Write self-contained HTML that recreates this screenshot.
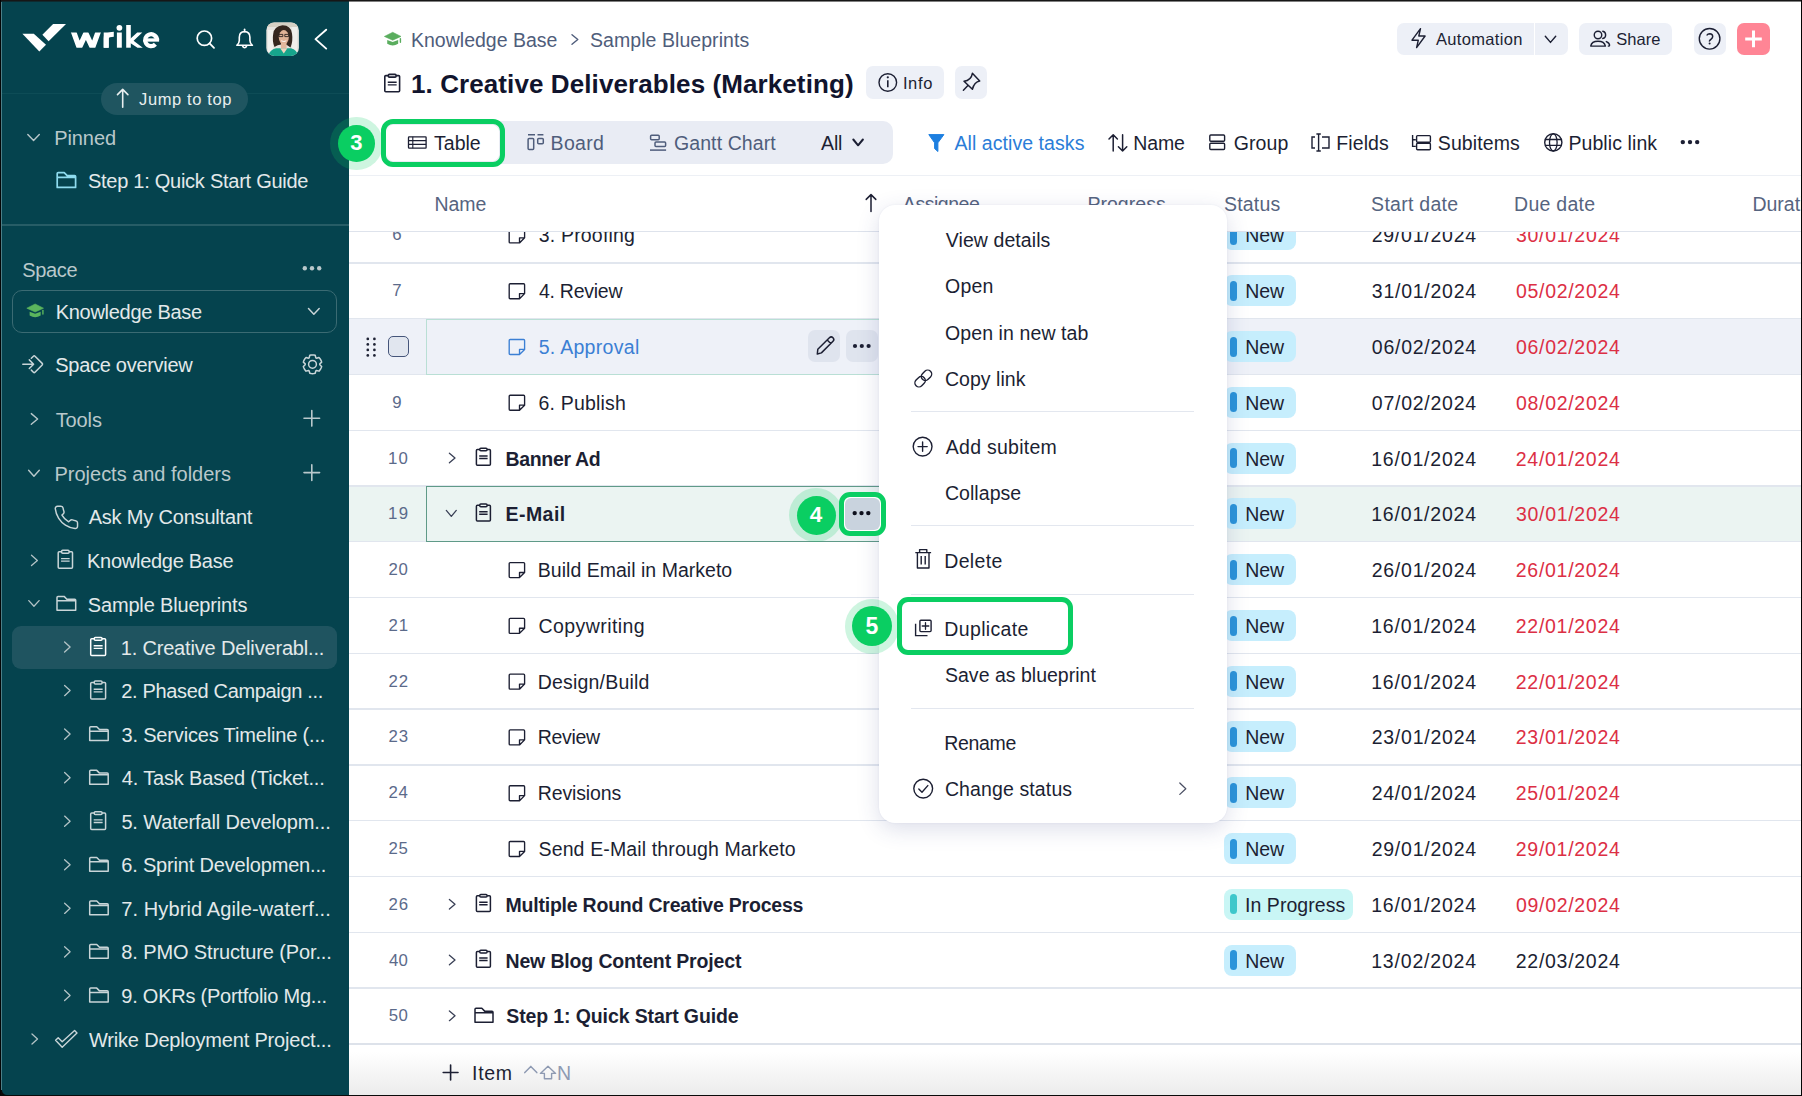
<!DOCTYPE html>
<html><head><meta charset="utf-8">
<style>
*{box-sizing:border-box;margin:0;padding:0}
html,body{width:1802px;height:1096px;overflow:hidden;background:#fff;font-family:"Liberation Sans",sans-serif;position:relative}
.a{position:absolute}
.t{position:absolute;white-space:nowrap;line-height:30px;height:30px}
svg{position:absolute;overflow:visible}
</style></head><body>
<div class="a" style="left:0px;top:0px;width:349px;height:1096px;background:#05434e;"></div>
<div class="a" style="left:1px;top:92.5px;width:348px;height:1px;background:#0d4c56;"></div>
<div class="a" style="left:1px;top:224px;width:348px;height:2px;background:#275d66;"></div>
<div class="a" style="left:101px;top:83px;width:147px;height:32px;background:#1f5560;border-radius:16px;"></div>
<div class="t" style="left:139.05px;top:83.80px;font-size:16.5px;color:#e8eeef;letter-spacing:0.620px;">Jump to top</div>
<div class="t" style="left:54.15px;top:122.50px;font-size:20px;color:#b9c8cb;letter-spacing:-0.070px;">Pinned</div>
<div class="t" style="left:87.90px;top:165.70px;font-size:20px;color:#e3e9ea;letter-spacing:-0.258px;">Step 1: Quick Start Guide</div>
<div class="t" style="left:22.30px;top:255.00px;font-size:20px;color:#b9c8cb;letter-spacing:-0.338px;">Space</div>
<div class="a" style="left:12px;top:289.5px;width:325px;height:43px;border:1.5px solid #3b6b73;border-radius:10px;"></div>
<div class="t" style="left:55.65px;top:297.00px;font-size:20px;color:#e3e9ea;letter-spacing:-0.277px;">Knowledge Base</div>
<div class="t" style="left:55.30px;top:350.00px;font-size:20px;color:#e3e9ea;letter-spacing:-0.288px;">Space overview</div>
<div class="t" style="left:55.75px;top:404.50px;font-size:20px;color:#b9c8cb;letter-spacing:-0.137px;">Tools</div>
<div class="t" style="left:54.55px;top:458.50px;font-size:20px;color:#b9c8cb;letter-spacing:-0.021px;">Projects and folders</div>
<div class="t" style="left:88.65px;top:502.20px;font-size:20px;color:#e3e9ea;letter-spacing:-0.184px;">Ask My Consultant</div>
<div class="t" style="left:87.05px;top:545.90px;font-size:20px;color:#e3e9ea;letter-spacing:-0.277px;">Knowledge Base</div>
<div class="t" style="left:87.80px;top:589.50px;font-size:20px;color:#e3e9ea;letter-spacing:-0.169px;">Sample Blueprints</div>
<div class="a" style="left:12px;top:626px;width:325px;height:43px;background:#1f5460;border-radius:9px;"></div>
<div class="t" style="left:120.70px;top:632.50px;font-size:20px;color:#e3e9ea;letter-spacing:-0.173px;">1. Creative Deliverabl...</div>
<div class="t" style="left:121.20px;top:676.05px;font-size:20px;color:#e3e9ea;letter-spacing:-0.329px;">2. Phased Campaign ...</div>
<div class="t" style="left:121.45px;top:719.60px;font-size:20px;color:#e3e9ea;letter-spacing:-0.162px;">3. Services Timeline (...</div>
<div class="t" style="left:121.75px;top:763.15px;font-size:20px;color:#e3e9ea;letter-spacing:-0.161px;">4. Task Based (Ticket...</div>
<div class="t" style="left:121.40px;top:806.70px;font-size:20px;color:#e3e9ea;letter-spacing:-0.146px;">5. Waterfall Developm...</div>
<div class="t" style="left:121.20px;top:850.25px;font-size:20px;color:#e3e9ea;letter-spacing:-0.173px;">6. Sprint Developmen...</div>
<div class="t" style="left:121.20px;top:893.80px;font-size:20px;color:#e3e9ea;letter-spacing:0.119px;">7. Hybrid Agile-waterf...</div>
<div class="t" style="left:121.35px;top:937.35px;font-size:20px;color:#e3e9ea;letter-spacing:-0.128px;">8. PMO Structure (Por...</div>
<div class="t" style="left:121.30px;top:980.90px;font-size:20px;color:#e3e9ea;letter-spacing:-0.237px;">9. OKRs (Portfolio Mg...</div>
<div class="t" style="left:88.90px;top:1024.50px;font-size:20px;color:#e3e9ea;letter-spacing:-0.177px;">Wrike Deployment Project...</div>
<svg style="left:0;top:0" width="1802" height="1096" viewBox="0 0 1802 1096"><polygon points="22.4,33.8 33.8,33.8 46,44.8 39.3,51.4" fill="#fff"/><polygon points="42.4,34.7 53.1,23.9 66,23.9 48.6,41.2" fill="#fff"/><defs><clipPath id="wk"><rect x="60" y="32.5" width="110" height="15.3"/></clipPath></defs><polyline clip-path="url(#wk)" points="72.2,28 79.3,47.6 85.9,33.5 92.5,47.6 99.6,28" fill="none" stroke="#fff" stroke-width="5.4" stroke-linejoin="miter" stroke-miterlimit="10"/><path d="M106.2,47.7 L106.2,38.5 Q106.2,34.2 113.8,34.2" fill="none" stroke="#fff" stroke-width="5"/><rect x="103.7" y="32.5" width="5" height="15.2" fill="#fff"/><rect x="116.9" y="32.5" width="4.9" height="15.2" fill="#fff"/><circle cx="119.4" cy="27.8" r="2.9" fill="#fff"/><rect x="126.2" y="25" width="4.6" height="22.7" fill="#fff"/><polygon points="129.5,39.5 137.2,32.5 142.3,32.5 133.6,40.8 142.8,47.7 137.5,47.7 129.5,42.5" fill="#fff"/><path d="M157.05,40.1 A5.95,5.95 0 1 0 155.4,44.3" fill="none" stroke="#fff" stroke-width="4.3"/><path d="M145,40 L159.1,40" stroke="#fff" stroke-width="3.3"/><circle cx="204.4" cy="38.2" r="7.2" fill="none" stroke="#fff" stroke-width="1.7"/><path d="M209.6,43.4 L214,47.8" stroke="#fff" stroke-width="1.8" stroke-linecap="round"/><path d="M236.8,45.3 Q239.3,43.3 239.3,40.5 L239.3,37.3 Q239.3,31.6 244.6,31.6 Q249.9,31.6 249.9,37.3 L249.9,40.5 Q249.9,43.3 252.4,45.3 Z" fill="none" stroke="#fff" stroke-width="1.6" stroke-linejoin="round"/><path d="M242.4,46 Q244.6,49.5 246.8,46" fill="none" stroke="#fff" stroke-width="1.6"/><path d="M244.6,29.2 L244.6,31.6" stroke="#fff" stroke-width="1.6" stroke-linecap="round"/><defs><clipPath id="av"><rect x="266.3" y="22.5" width="32.6" height="33.4" rx="8"/></clipPath></defs>
<g clip-path="url(#av)">
<rect x="266" y="22" width="34" height="35" fill="#e6e4df"/>
<rect x="266" y="22" width="34" height="5" fill="#d6d0c4"/>
<rect x="268" y="30" width="5" height="22" fill="#f2f1ee"/>
<rect x="292" y="27" width="5" height="26" fill="#f0eeea"/>
<path d="M274.5,47 Q272,41 273.2,34 Q274,26.5 282.5,25.3 Q291,25.5 292,33.5 Q293.2,41 290.5,47.5 Q287,44 282.5,44.5 Q278,44 274.5,47 Z" fill="#35261e"/>
<ellipse cx="283.8" cy="37.2" rx="5" ry="7.1" fill="#e0b296"/>
<path d="M279,34.4 L282.8,34.4 L282.8,36.6 L279,36.6 Z M284.8,34.4 L288.6,34.4 L288.6,36.6 L284.8,36.6 Z" fill="none" stroke="#2b2320" stroke-width="0.9"/>
<path d="M281.2,40.8 Q283.8,42.3 286.4,40.8" fill="none" stroke="#fff" stroke-width="0.9"/>
<rect x="281" y="43" width="5.6" height="6" fill="#e3b89d"/>
<path d="M268,57 Q269,50 276,48.2 L291,48.2 Q297.5,50 298.5,57 Z" fill="#17a58c"/>
<path d="M280.2,48.2 L283.8,53.5 L287.4,48.2 Z" fill="#f1d3bf"/>
</g><polyline points="326.20,29.70 315.50,39.15 326.20,48.60" fill="none" stroke="#fff" stroke-width="1.9" stroke-linecap="round" stroke-linejoin="round" /><path d="M122.7,89.5 L122.7,107.2 M117.5,94.6 L122.7,89.4 L127.9,94.6" fill="none" stroke="#e8eeef" stroke-width="1.6" stroke-linecap="round" stroke-linejoin="round"/><polyline points="27.80,134.50 33.55,140.50 39.30,134.50" fill="none" stroke="#b9c8cb" stroke-width="1.4" stroke-linecap="round" stroke-linejoin="round" /><path d="M57.2,187.4 L57.2,173.6 Q57.2,172.6 58.2,172.6 L64.192,172.6 L67.152,175.56 L74.6,175.56 Q75.6,175.56 75.6,176.56 L75.6,187.4 Z M57.2,177.336 L75.6,177.336" fill="none" stroke="#8fdcef" stroke-width="1.7" stroke-linejoin="round"/><circle cx="304.8" cy="268.3" r="2.2" fill="#b9c8cb"/><circle cx="312.0" cy="268.3" r="2.2" fill="#b9c8cb"/><circle cx="319.2" cy="268.3" r="2.2" fill="#b9c8cb"/><path d="M26.8,308.2 L35.15,304 L43.5,308.2 L35.15,311.98 Z" fill="#5bb55d" stroke="#5bb55d" stroke-width="0.6" stroke-linejoin="round"/><path d="M29.639,311.84 L35.15,313.8 L40.661,311.84 L40.661,315.62 Q35.15,319.12 29.639,315.62 Z" fill="#5bb55d"/><path d="M42.915499999999994,310.44 L42.915499999999994,314.08" stroke="#5bb55d" stroke-width="1.4" stroke-linecap="round"/><polyline points="308.50,308.50 313.85,314.20 319.20,308.50" fill="none" stroke="#c8d3d6" stroke-width="1.5" stroke-linecap="round" stroke-linejoin="round" /><path d="M22.8,364.2 L33.6,364.2 M29.3,359.9 L33.6,364.2 L29.3,368.5" fill="none" stroke="#c9d5d8" stroke-width="1.5" stroke-linecap="round" stroke-linejoin="round"/><path d="M31.3,358.3 L33.4,356.2 Q34.2,355.4 35,356.2 L42.2,363.4 Q43,364.2 42.2,365 L35,372.2 Q34.2,373 33.4,372.2 L31.3,370.1" fill="none" stroke="#c9d5d8" stroke-width="1.5" stroke-linecap="round" stroke-linejoin="round"/><polygon points="309.20,357.79 309.80,355.30 311.14,355.00 312.50,354.90 313.86,355.00 315.20,355.30 315.80,357.79 315.92,357.85 316.03,357.91 316.15,357.98 316.26,358.05 316.38,358.11 316.49,358.19 318.95,357.46 319.87,358.47 320.64,359.60 321.24,360.83 321.65,362.14 319.79,363.90 319.80,364.03 319.80,364.17 319.80,364.30 319.80,364.43 319.80,364.57 319.79,364.70 321.65,366.46 321.24,367.77 320.64,369.00 319.87,370.13 318.95,371.14 316.49,370.41 316.38,370.49 316.26,370.55 316.15,370.62 316.03,370.69 315.92,370.75 315.80,370.81 315.20,373.30 313.86,373.60 312.50,373.70 311.14,373.60 309.80,373.30 309.20,370.81 309.08,370.75 308.97,370.69 308.85,370.62 308.74,370.55 308.62,370.49 308.51,370.41 306.05,371.14 305.13,370.13 304.36,369.00 303.76,367.77 303.35,366.46 305.21,364.70 305.20,364.57 305.20,364.43 305.20,364.30 305.20,364.17 305.20,364.03 305.21,363.90 303.35,362.14 303.76,360.83 304.36,359.60 305.13,358.47 306.05,357.46 308.51,358.19 308.62,358.11 308.74,358.05 308.85,357.98 308.97,357.91 309.08,357.85" fill="none" stroke="#c9d5d8" stroke-width="1.5" stroke-linecap="round" stroke-linejoin="round" /><circle cx="312.5" cy="364.3" r="3.9" fill="none" stroke="#c9d5d8" stroke-width="1.5"/><polyline points="31.30,413.60 37.60,418.95 31.30,424.30" fill="none" stroke="#b9c8cb" stroke-width="1.4" stroke-linecap="round" stroke-linejoin="round" /><path d="M304.0,418.3 L319.6,418.3 M311.8,410.5 L311.8,426.1" stroke="#b9c8cb" stroke-width="1.6" stroke-linecap="round"/><polyline points="28.60,470.20 33.95,476.20 39.30,470.20" fill="none" stroke="#b9c8cb" stroke-width="1.4" stroke-linecap="round" stroke-linejoin="round" /><path d="M304.0,472.6 L319.6,472.6 M311.8,464.8 L311.8,480.40000000000003" stroke="#b9c8cb" stroke-width="1.6" stroke-linecap="round"/><g transform="translate(52.9,504) scale(1.12)"><path d="M22 16.92v3a2 2 0 0 1-2.18 2 19.79 19.79 0 0 1-8.63-3.07 19.5 19.5 0 0 1-6-6 19.79 19.79 0 0 1-3.07-8.67A2 2 0 0 1 4.11 2h3a2 2 0 0 1 2 1.72 12.84 12.84 0 0 0 .7 2.81 2 2 0 0 1-.45 2.11L8.09 9.91a16 16 0 0 0 6 6l1.27-1.27a2 2 0 0 1 2.11-.45 12.84 12.84 0 0 0 2.81.7A2 2 0 0 1 22 16.92z" fill="none" stroke="#c9d5d8" stroke-width="1.3" stroke-linejoin="round"/></g><polyline points="31.50,555.30 37.40,560.40 31.50,565.50" fill="none" stroke="#b3c3c6" stroke-width="1.3" stroke-linecap="round" stroke-linejoin="round" /><path d="M61.632000000000005,551.657 L59.2,551.657 Q58.2,551.657 58.2,552.657 L58.2,567.3 Q58.2,568.3 59.2,568.3 L71.5,568.3 Q72.5,568.3 72.5,567.3 L72.5,552.657 Q72.5,551.657 71.5,551.657 L69.068,551.657" fill="none" stroke="#c9d5d8" stroke-width="1.5" stroke-linejoin="round"/><rect x="61.632000000000005" y="550.35" width="7.435999999999999" height="2.8049999999999895" rx="1" fill="none" stroke="#c9d5d8" stroke-width="1.5"/><path d="M61.06,558.576 L69.64,558.576 M61.06,561.194 L69.64,561.194" stroke="#c9d5d8" stroke-width="1.35"/><polyline points="28.80,600.60 33.95,606.20 39.10,600.60" fill="none" stroke="#b3c3c6" stroke-width="1.3" stroke-linecap="round" stroke-linejoin="round" /><path d="M57,610.2 L57,597.4 Q57,596.4 58,596.4 L64.106,596.4 L66.86600000000001,599.16 L74.7,599.16 Q75.7,599.16 75.7,600.16 L75.7,610.2 Z M57,600.816 L75.7,600.816" fill="none" stroke="#c9d5d8" stroke-width="1.5" stroke-linejoin="round"/><polyline points="64.60,641.90 70.10,647.00 64.60,652.10" fill="none" stroke="#b3c3c6" stroke-width="1.3" stroke-linecap="round" stroke-linejoin="round" /><path d="M94.276,638.846 L91.7,638.846 Q90.7,638.846 90.7,639.846 L90.7,654.4 Q90.7,655.4 91.7,655.4 L104.6,655.4 Q105.6,655.4 105.6,654.4 L105.6,639.846 Q105.6,638.846 104.6,638.846 L102.024,638.846" fill="none" stroke="#ffffff" stroke-width="1.5" stroke-linejoin="round"/><rect x="94.276" y="637.55" width="7.747999999999996" height="2.790000000000003" rx="1" fill="none" stroke="#ffffff" stroke-width="1.5"/><path d="M93.68,645.728 L102.61999999999999,645.728 M93.68,648.332 L102.61999999999999,648.332" stroke="#ffffff" stroke-width="1.35"/><polyline points="64.60,685.45 70.10,690.55 64.60,695.65" fill="none" stroke="#b3c3c6" stroke-width="1.3" stroke-linecap="round" stroke-linejoin="round" /><path d="M94.276,682.396 L91.7,682.396 Q90.7,682.396 90.7,683.396 L90.7,697.9499999999999 Q90.7,698.9499999999999 91.7,698.9499999999999 L104.6,698.9499999999999 Q105.6,698.9499999999999 105.6,697.9499999999999 L105.6,683.396 Q105.6,682.396 104.6,682.396 L102.024,682.396" fill="none" stroke="#c9d5d8" stroke-width="1.5" stroke-linejoin="round"/><rect x="94.276" y="681.0999999999999" width="7.747999999999996" height="2.790000000000003" rx="1" fill="none" stroke="#c9d5d8" stroke-width="1.5"/><path d="M93.68,689.2779999999999 L102.61999999999999,689.2779999999999 M93.68,691.882 L102.61999999999999,691.882" stroke="#c9d5d8" stroke-width="1.35"/><polyline points="64.60,729.00 70.10,734.10 64.60,739.20" fill="none" stroke="#b3c3c6" stroke-width="1.3" stroke-linecap="round" stroke-linejoin="round" /><path d="M89.7,740.6 L89.7,727.8000000000001 Q89.7,726.8000000000001 90.7,726.8000000000001 L96.73,726.8000000000001 L99.49,729.5600000000001 L107.2,729.5600000000001 Q108.2,729.5600000000001 108.2,730.5600000000001 L108.2,740.6 Z M89.7,731.216 L108.2,731.216" fill="none" stroke="#c9d5d8" stroke-width="1.5" stroke-linejoin="round"/><polyline points="64.60,772.55 70.10,777.65 64.60,782.75" fill="none" stroke="#b3c3c6" stroke-width="1.3" stroke-linecap="round" stroke-linejoin="round" /><path d="M89.7,784.15 L89.7,771.35 Q89.7,770.35 90.7,770.35 L96.73,770.35 L99.49,773.11 L107.2,773.11 Q108.2,773.11 108.2,774.11 L108.2,784.15 Z M89.7,774.766 L108.2,774.766" fill="none" stroke="#c9d5d8" stroke-width="1.5" stroke-linejoin="round"/><polyline points="64.60,816.10 70.10,821.20 64.60,826.30" fill="none" stroke="#b3c3c6" stroke-width="1.3" stroke-linecap="round" stroke-linejoin="round" /><path d="M94.276,813.046 L91.7,813.046 Q90.7,813.046 90.7,814.046 L90.7,828.6 Q90.7,829.6 91.7,829.6 L104.6,829.6 Q105.6,829.6 105.6,828.6 L105.6,814.046 Q105.6,813.046 104.6,813.046 L102.024,813.046" fill="none" stroke="#c9d5d8" stroke-width="1.5" stroke-linejoin="round"/><rect x="94.276" y="811.75" width="7.747999999999996" height="2.790000000000003" rx="1" fill="none" stroke="#c9d5d8" stroke-width="1.5"/><path d="M93.68,819.928 L102.61999999999999,819.928 M93.68,822.532 L102.61999999999999,822.532" stroke="#c9d5d8" stroke-width="1.35"/><polyline points="64.60,859.65 70.10,864.75 64.60,869.85" fill="none" stroke="#b3c3c6" stroke-width="1.3" stroke-linecap="round" stroke-linejoin="round" /><path d="M89.7,871.25 L89.7,858.45 Q89.7,857.45 90.7,857.45 L96.73,857.45 L99.49,860.21 L107.2,860.21 Q108.2,860.21 108.2,861.21 L108.2,871.25 Z M89.7,861.866 L108.2,861.866" fill="none" stroke="#c9d5d8" stroke-width="1.5" stroke-linejoin="round"/><polyline points="64.60,903.20 70.10,908.30 64.60,913.40" fill="none" stroke="#b3c3c6" stroke-width="1.3" stroke-linecap="round" stroke-linejoin="round" /><path d="M89.7,914.8 L89.7,902.0 Q89.7,901.0 90.7,901.0 L96.73,901.0 L99.49,903.76 L107.2,903.76 Q108.2,903.76 108.2,904.76 L108.2,914.8 Z M89.7,905.4159999999999 L108.2,905.4159999999999" fill="none" stroke="#c9d5d8" stroke-width="1.5" stroke-linejoin="round"/><polyline points="64.60,946.75 70.10,951.85 64.60,956.95" fill="none" stroke="#b3c3c6" stroke-width="1.3" stroke-linecap="round" stroke-linejoin="round" /><path d="M89.7,958.3499999999999 L89.7,945.55 Q89.7,944.55 90.7,944.55 L96.73,944.55 L99.49,947.31 L107.2,947.31 Q108.2,947.31 108.2,948.31 L108.2,958.3499999999999 Z M89.7,948.9659999999999 L108.2,948.9659999999999" fill="none" stroke="#c9d5d8" stroke-width="1.5" stroke-linejoin="round"/><polyline points="64.60,990.30 70.10,995.40 64.60,1000.50" fill="none" stroke="#b3c3c6" stroke-width="1.3" stroke-linecap="round" stroke-linejoin="round" /><path d="M89.7,1001.9 L89.7,989.1 Q89.7,988.1 90.7,988.1 L96.73,988.1 L99.49,990.86 L107.2,990.86 Q108.2,990.86 108.2,991.86 L108.2,1001.9 Z M89.7,992.516 L108.2,992.516" fill="none" stroke="#c9d5d8" stroke-width="1.5" stroke-linejoin="round"/><polyline points="32.00,1034.00 37.50,1039.00 32.00,1044.00" fill="none" stroke="#b3c3c6" stroke-width="1.3" stroke-linecap="round" stroke-linejoin="round" /><path d="M55.6,1040.3 L58.2,1037.8 L62.2,1041.8 L74.6,1030.6 L77,1033 L62.2,1047.2 Z" fill="none" stroke="#c9d5d8" stroke-width="1.4" stroke-linejoin="round"/></svg>
<div class="a" style="left:349px;top:318.69000000000005px;width:1452px;height:55.78px;background:#eef1f8;"></div>
<div class="a" style="left:349px;top:486.03px;width:1452px;height:55.78px;background:#ebf4f2;"></div>
<div class="a" style="left:349px;top:262.21px;width:1452px;height:1.3px;background:#e1e6ee;"></div>
<div class="a" style="left:349px;top:317.98999999999995px;width:1452px;height:1.3px;background:#e1e6ee;"></div>
<div class="a" style="left:349px;top:373.77px;width:1452px;height:1.3px;background:#e1e6ee;"></div>
<div class="a" style="left:349px;top:429.54999999999995px;width:1452px;height:1.3px;background:#e1e6ee;"></div>
<div class="a" style="left:349px;top:485.3299999999999px;width:1452px;height:1.3px;background:#e1e6ee;"></div>
<div class="a" style="left:349px;top:541.1099999999999px;width:1452px;height:1.3px;background:#e1e6ee;"></div>
<div class="a" style="left:349px;top:596.89px;width:1452px;height:1.3px;background:#e1e6ee;"></div>
<div class="a" style="left:349px;top:652.67px;width:1452px;height:1.3px;background:#e1e6ee;"></div>
<div class="a" style="left:349px;top:708.4499999999999px;width:1452px;height:1.3px;background:#e1e6ee;"></div>
<div class="a" style="left:349px;top:764.2299999999999px;width:1452px;height:1.3px;background:#e1e6ee;"></div>
<div class="a" style="left:349px;top:820.0099999999999px;width:1452px;height:1.3px;background:#e1e6ee;"></div>
<div class="a" style="left:349px;top:875.79px;width:1452px;height:1.3px;background:#e1e6ee;"></div>
<div class="a" style="left:349px;top:931.5699999999999px;width:1452px;height:1.3px;background:#e1e6ee;"></div>
<div class="a" style="left:349px;top:987.3499999999999px;width:1452px;height:1.3px;background:#e1e6ee;"></div>
<div class="a" style="left:349px;top:1043.13px;width:1452px;height:1.3px;background:#e1e6ee;"></div>
<div class="a" style="left:426px;top:318.59000000000003px;width:460px;height:56.38px;border:1.5px solid #b9dfd5;border-right:none;"></div>
<div class="a" style="left:426px;top:485.92999999999995px;width:460px;height:56.38px;border:1.5px solid #5f9a88;border-right:none;"></div>
<div class="t" style="left:392.15px;top:220.42px;font-size:16.8px;color:#5b6a8a;">6</div>
<div class="t" style="left:538.65px;top:220.42px;font-size:19.5px;color:#1c1f33;letter-spacing:0.200px;">3. Proofing</div>
<div class="a" style="left:1224px;top:219.42px;width:72px;height:31px;background:#c6eefd;border-radius:8px;"></div>
<div class="a" style="left:1230px;top:225.11999999999998px;width:7.4px;height:20px;background:#2b94da;border-radius:4px;"></div>
<div class="t" style="left:1245.20px;top:220.42px;font-size:19.5px;color:#1c1f33;letter-spacing:-0.050px;">New</div>
<div class="t" style="left:1371.65px;top:220.42px;font-size:19.5px;color:#1c1f33;letter-spacing:0.767px;">29/01/2024</div>
<div class="t" style="left:1515.95px;top:220.42px;font-size:19.5px;color:#dc2f45;letter-spacing:0.700px;">30/01/2024</div>
<div class="t" style="left:392.15px;top:276.20px;font-size:16.8px;color:#5b6a8a;">7</div>
<div class="t" style="left:538.95px;top:276.20px;font-size:19.5px;color:#1c1f33;letter-spacing:-0.256px;">4. Review</div>
<div class="a" style="left:1224px;top:275.2px;width:72px;height:31px;background:#c6eefd;border-radius:8px;"></div>
<div class="a" style="left:1230px;top:280.9px;width:7.4px;height:20px;background:#2b94da;border-radius:4px;"></div>
<div class="t" style="left:1245.20px;top:276.20px;font-size:19.5px;color:#1c1f33;letter-spacing:-0.050px;">New</div>
<div class="t" style="left:1371.85px;top:276.20px;font-size:19.5px;color:#1c1f33;letter-spacing:0.744px;">31/01/2024</div>
<div class="t" style="left:1515.95px;top:276.20px;font-size:19.5px;color:#dc2f45;letter-spacing:0.700px;">05/02/2024</div>
<div class="a" style="left:387.5px;top:336.2px;width:21.3px;height:21px;border:1.5px solid #45557a;border-radius:5px;background:#e1e6ef;"></div>
<div class="t" style="left:538.65px;top:331.98px;font-size:19.5px;color:#3b7fd4;letter-spacing:0.305px;">5. Approval</div>
<div class="a" style="left:1224px;top:330.98px;width:72px;height:31px;background:#c6eefd;border-radius:8px;"></div>
<div class="a" style="left:1230px;top:336.68px;width:7.4px;height:20px;background:#2b94da;border-radius:4px;"></div>
<div class="t" style="left:1245.20px;top:331.98px;font-size:19.5px;color:#1c1f33;letter-spacing:-0.050px;">New</div>
<div class="t" style="left:1371.85px;top:331.98px;font-size:19.5px;color:#1c1f33;letter-spacing:0.744px;">06/02/2024</div>
<div class="t" style="left:1515.95px;top:331.98px;font-size:19.5px;color:#dc2f45;letter-spacing:0.700px;">06/02/2024</div>
<div class="t" style="left:392.25px;top:387.76px;font-size:16.8px;color:#5b6a8a;">9</div>
<div class="t" style="left:538.40px;top:387.76px;font-size:19.5px;color:#1c1f33;letter-spacing:0.211px;">6. Publish</div>
<div class="a" style="left:1224px;top:386.76px;width:72px;height:31px;background:#c6eefd;border-radius:8px;"></div>
<div class="a" style="left:1230px;top:392.46px;width:7.4px;height:20px;background:#2b94da;border-radius:4px;"></div>
<div class="t" style="left:1245.20px;top:387.76px;font-size:19.5px;color:#1c1f33;letter-spacing:-0.050px;">New</div>
<div class="t" style="left:1371.85px;top:387.76px;font-size:19.5px;color:#1c1f33;letter-spacing:0.744px;">07/02/2024</div>
<div class="t" style="left:1515.95px;top:387.76px;font-size:19.5px;color:#dc2f45;letter-spacing:0.700px;">08/02/2024</div>
<div class="t" style="left:388.05px;top:443.54px;font-size:16.8px;color:#5b6a8a;letter-spacing:1.200px;">10</div>
<div class="t" style="left:505.50px;top:443.54px;font-size:19.5px;color:#1c1f33;letter-spacing:-0.325px;font-weight:bold;">Banner Ad</div>
<div class="a" style="left:1224px;top:442.53999999999996px;width:72px;height:31px;background:#c6eefd;border-radius:8px;"></div>
<div class="a" style="left:1230px;top:448.23999999999995px;width:7.4px;height:20px;background:#2b94da;border-radius:4px;"></div>
<div class="t" style="left:1245.20px;top:443.54px;font-size:19.5px;color:#1c1f33;letter-spacing:-0.050px;">New</div>
<div class="t" style="left:1371.15px;top:443.54px;font-size:19.5px;color:#1c1f33;letter-spacing:0.822px;">16/01/2024</div>
<div class="t" style="left:1515.75px;top:443.54px;font-size:19.5px;color:#dc2f45;letter-spacing:0.722px;">24/01/2024</div>
<div class="t" style="left:388.05px;top:499.32px;font-size:16.8px;color:#5b6a8a;letter-spacing:1.350px;">19</div>
<div class="t" style="left:505.50px;top:499.32px;font-size:19.5px;color:#1c1f33;letter-spacing:0.450px;font-weight:bold;">E-Mail</div>
<div class="a" style="left:1224px;top:498.31999999999994px;width:72px;height:31px;background:#c6eefd;border-radius:8px;"></div>
<div class="a" style="left:1230px;top:504.0199999999999px;width:7.4px;height:20px;background:#2b94da;border-radius:4px;"></div>
<div class="t" style="left:1245.20px;top:499.32px;font-size:19.5px;color:#1c1f33;letter-spacing:-0.050px;">New</div>
<div class="t" style="left:1371.15px;top:499.32px;font-size:19.5px;color:#1c1f33;letter-spacing:0.822px;">16/01/2024</div>
<div class="t" style="left:1515.95px;top:499.32px;font-size:19.5px;color:#dc2f45;letter-spacing:0.700px;">30/01/2024</div>
<div class="t" style="left:388.45px;top:555.10px;font-size:16.8px;color:#5b6a8a;letter-spacing:0.800px;">20</div>
<div class="t" style="left:537.80px;top:555.10px;font-size:19.5px;color:#1c1f33;letter-spacing:0.019px;">Build Email in Marketo</div>
<div class="a" style="left:1224px;top:554.1px;width:72px;height:31px;background:#c6eefd;border-radius:8px;"></div>
<div class="a" style="left:1230px;top:559.8000000000001px;width:7.4px;height:20px;background:#2b94da;border-radius:4px;"></div>
<div class="t" style="left:1245.20px;top:555.10px;font-size:19.5px;color:#1c1f33;letter-spacing:-0.050px;">New</div>
<div class="t" style="left:1371.65px;top:555.10px;font-size:19.5px;color:#1c1f33;letter-spacing:0.767px;">26/01/2024</div>
<div class="t" style="left:1515.75px;top:555.10px;font-size:19.5px;color:#dc2f45;letter-spacing:0.722px;">26/01/2024</div>
<div class="t" style="left:388.45px;top:610.88px;font-size:16.8px;color:#5b6a8a;letter-spacing:0.950px;">21</div>
<div class="t" style="left:538.40px;top:610.88px;font-size:19.5px;color:#1c1f33;letter-spacing:0.445px;">Copywriting</div>
<div class="a" style="left:1224px;top:609.88px;width:72px;height:31px;background:#c6eefd;border-radius:8px;"></div>
<div class="a" style="left:1230px;top:615.58px;width:7.4px;height:20px;background:#2b94da;border-radius:4px;"></div>
<div class="t" style="left:1245.20px;top:610.88px;font-size:19.5px;color:#1c1f33;letter-spacing:-0.050px;">New</div>
<div class="t" style="left:1371.15px;top:610.88px;font-size:19.5px;color:#1c1f33;letter-spacing:0.822px;">16/01/2024</div>
<div class="t" style="left:1515.75px;top:610.88px;font-size:19.5px;color:#dc2f45;letter-spacing:0.722px;">22/01/2024</div>
<div class="t" style="left:388.45px;top:666.66px;font-size:16.8px;color:#5b6a8a;letter-spacing:1.000px;">22</div>
<div class="t" style="left:537.80px;top:666.66px;font-size:19.5px;color:#1c1f33;letter-spacing:0.186px;">Design/Build</div>
<div class="a" style="left:1224px;top:665.66px;width:72px;height:31px;background:#c6eefd;border-radius:8px;"></div>
<div class="a" style="left:1230px;top:671.36px;width:7.4px;height:20px;background:#2b94da;border-radius:4px;"></div>
<div class="t" style="left:1245.20px;top:666.66px;font-size:19.5px;color:#1c1f33;letter-spacing:-0.050px;">New</div>
<div class="t" style="left:1371.15px;top:666.66px;font-size:19.5px;color:#1c1f33;letter-spacing:0.822px;">16/01/2024</div>
<div class="t" style="left:1515.75px;top:666.66px;font-size:19.5px;color:#dc2f45;letter-spacing:0.722px;">22/01/2024</div>
<div class="t" style="left:388.45px;top:722.44px;font-size:16.8px;color:#5b6a8a;letter-spacing:0.900px;">23</div>
<div class="t" style="left:537.80px;top:722.44px;font-size:19.5px;color:#1c1f33;letter-spacing:-0.340px;">Review</div>
<div class="a" style="left:1224px;top:721.4399999999999px;width:72px;height:31px;background:#c6eefd;border-radius:8px;"></div>
<div class="a" style="left:1230px;top:727.14px;width:7.4px;height:20px;background:#2b94da;border-radius:4px;"></div>
<div class="t" style="left:1245.20px;top:722.44px;font-size:19.5px;color:#1c1f33;letter-spacing:-0.050px;">New</div>
<div class="t" style="left:1371.65px;top:722.44px;font-size:19.5px;color:#1c1f33;letter-spacing:0.767px;">23/01/2024</div>
<div class="t" style="left:1515.75px;top:722.44px;font-size:19.5px;color:#dc2f45;letter-spacing:0.722px;">23/01/2024</div>
<div class="t" style="left:388.45px;top:778.22px;font-size:16.8px;color:#5b6a8a;letter-spacing:0.650px;">24</div>
<div class="t" style="left:537.80px;top:778.22px;font-size:19.5px;color:#1c1f33;letter-spacing:-0.144px;">Revisions</div>
<div class="a" style="left:1224px;top:777.2199999999999px;width:72px;height:31px;background:#c6eefd;border-radius:8px;"></div>
<div class="a" style="left:1230px;top:782.92px;width:7.4px;height:20px;background:#2b94da;border-radius:4px;"></div>
<div class="t" style="left:1245.20px;top:778.22px;font-size:19.5px;color:#1c1f33;letter-spacing:-0.050px;">New</div>
<div class="t" style="left:1371.65px;top:778.22px;font-size:19.5px;color:#1c1f33;letter-spacing:0.767px;">24/01/2024</div>
<div class="t" style="left:1515.75px;top:778.22px;font-size:19.5px;color:#dc2f45;letter-spacing:0.722px;">25/01/2024</div>
<div class="t" style="left:388.45px;top:834.00px;font-size:16.8px;color:#5b6a8a;letter-spacing:0.850px;">25</div>
<div class="t" style="left:538.50px;top:834.00px;font-size:19.5px;color:#1c1f33;letter-spacing:0.137px;">Send E-Mail through Marketo</div>
<div class="a" style="left:1224px;top:833.0px;width:72px;height:31px;background:#c6eefd;border-radius:8px;"></div>
<div class="a" style="left:1230px;top:838.7px;width:7.4px;height:20px;background:#2b94da;border-radius:4px;"></div>
<div class="t" style="left:1245.20px;top:834.00px;font-size:19.5px;color:#1c1f33;letter-spacing:-0.050px;">New</div>
<div class="t" style="left:1371.65px;top:834.00px;font-size:19.5px;color:#1c1f33;letter-spacing:0.767px;">29/01/2024</div>
<div class="t" style="left:1515.75px;top:834.00px;font-size:19.5px;color:#dc2f45;letter-spacing:0.722px;">29/01/2024</div>
<div class="t" style="left:388.45px;top:889.78px;font-size:16.8px;color:#5b6a8a;letter-spacing:0.900px;">26</div>
<div class="t" style="left:505.50px;top:889.78px;font-size:19.5px;color:#1c1f33;letter-spacing:-0.220px;font-weight:bold;">Multiple Round Creative Process</div>
<div class="a" style="left:1224px;top:888.78px;width:129px;height:31px;background:#c9f6f5;border-radius:8px;"></div>
<div class="a" style="left:1230px;top:894.48px;width:7.4px;height:20px;background:#3ec7cb;border-radius:4px;"></div>
<div class="t" style="left:1245.00px;top:889.78px;font-size:19.5px;color:#1c1f33;letter-spacing:0.050px;">In Progress</div>
<div class="t" style="left:1371.15px;top:889.78px;font-size:19.5px;color:#1c1f33;letter-spacing:0.822px;">16/01/2024</div>
<div class="t" style="left:1515.95px;top:889.78px;font-size:19.5px;color:#dc2f45;letter-spacing:0.700px;">09/02/2024</div>
<div class="t" style="left:388.95px;top:945.56px;font-size:16.8px;color:#5b6a8a;letter-spacing:0.300px;">40</div>
<div class="t" style="left:505.50px;top:945.56px;font-size:19.5px;color:#1c1f33;letter-spacing:-0.152px;font-weight:bold;">New Blog Content Project</div>
<div class="a" style="left:1224px;top:944.56px;width:72px;height:31px;background:#c6eefd;border-radius:8px;"></div>
<div class="a" style="left:1230px;top:950.26px;width:7.4px;height:20px;background:#2b94da;border-radius:4px;"></div>
<div class="t" style="left:1245.20px;top:945.56px;font-size:19.5px;color:#1c1f33;letter-spacing:-0.050px;">New</div>
<div class="t" style="left:1371.15px;top:945.56px;font-size:19.5px;color:#1c1f33;letter-spacing:0.822px;">13/02/2024</div>
<div class="t" style="left:1515.75px;top:945.56px;font-size:19.5px;color:#1c1f33;letter-spacing:0.722px;">22/03/2024</div>
<div class="t" style="left:388.65px;top:1001.34px;font-size:16.8px;color:#5b6a8a;letter-spacing:0.600px;">50</div>
<div class="t" style="left:506.25px;top:1001.34px;font-size:19.5px;color:#1c1f33;letter-spacing:-0.115px;font-weight:bold;">Step 1: Quick Start Guide</div>
<div class="a" style="left:807.9px;top:330.3px;width:32.1px;height:32px;background:#dfe4ee;border-radius:7px;"></div>
<div class="a" style="left:846px;top:330.3px;width:32px;height:32px;background:#dfe4ee;border-radius:7px;"></div>
<svg style="left:0;top:0" width="1802" height="1096" viewBox="0 0 1802 1096"><path d="M524.6,237.83799999999997 L524.6,228.92 Q524.6,227.92 523.6,227.92 L510.2,227.92 Q509.2,227.92 509.2,228.92 L509.2,241.92 Q509.2,242.92 510.2,242.92 L519.518,242.92 Z M519.518,242.92 L519.518,237.83799999999997 L524.6,237.83799999999997" fill="none" stroke="#1c1f33" stroke-width="1.35" stroke-linejoin="round"/><path d="M524.6,293.618 L524.6,284.7 Q524.6,283.7 523.6,283.7 L510.2,283.7 Q509.2,283.7 509.2,284.7 L509.2,297.7 Q509.2,298.7 510.2,298.7 L519.518,298.7 Z M519.518,298.7 L519.518,293.618 L524.6,293.618" fill="none" stroke="#1c1f33" stroke-width="1.35" stroke-linejoin="round"/><circle cx="367.8" cy="338.9" r="1.35" fill="#1f2335" stroke="none" stroke-width="1.5"/><circle cx="367.8" cy="344.4" r="1.35" fill="#1f2335" stroke="none" stroke-width="1.5"/><circle cx="367.8" cy="349.9" r="1.35" fill="#1f2335" stroke="none" stroke-width="1.5"/><circle cx="367.8" cy="355.4" r="1.35" fill="#1f2335" stroke="none" stroke-width="1.5"/><circle cx="374.40000000000003" cy="338.9" r="1.35" fill="#1f2335" stroke="none" stroke-width="1.5"/><circle cx="374.40000000000003" cy="344.4" r="1.35" fill="#1f2335" stroke="none" stroke-width="1.5"/><circle cx="374.40000000000003" cy="349.9" r="1.35" fill="#1f2335" stroke="none" stroke-width="1.5"/><circle cx="374.40000000000003" cy="355.4" r="1.35" fill="#1f2335" stroke="none" stroke-width="1.5"/><path d="M524.6,349.398 L524.6,340.48 Q524.6,339.48 523.6,339.48 L510.2,339.48 Q509.2,339.48 509.2,340.48 L509.2,353.48 Q509.2,354.48 510.2,354.48 L519.518,354.48 Z M519.518,354.48 L519.518,349.398 L524.6,349.398" fill="none" stroke="#3b7fd4" stroke-width="1.35" stroke-linejoin="round"/><path d="M524.6,405.178 L524.6,396.26 Q524.6,395.26 523.6,395.26 L510.2,395.26 Q509.2,395.26 509.2,396.26 L509.2,409.26 Q509.2,410.26 510.2,410.26 L519.518,410.26 Z M519.518,410.26 L519.518,405.178 L524.6,405.178" fill="none" stroke="#1c1f33" stroke-width="1.35" stroke-linejoin="round"/><polyline points="449.40,453.24 455.00,458.04 449.40,462.84" fill="none" stroke="#3a4056" stroke-width="1.3" stroke-linecap="round" stroke-linejoin="round" /><path d="M479.76,449.39799999999997 L477.4,449.39799999999997 Q476.4,449.39799999999997 476.4,450.39799999999997 L476.4,464.23999999999995 Q476.4,465.23999999999995 477.4,465.23999999999995 L489.4,465.23999999999995 Q490.4,465.23999999999995 490.4,464.23999999999995 L490.4,450.39799999999997 Q490.4,449.39799999999997 489.4,449.39799999999997 L487.03999999999996,449.39799999999997" fill="none" stroke="#1c1f33" stroke-width="1.5" stroke-linejoin="round"/><rect x="479.76" y="448.18999999999994" width="7.28" height="2.6700000000000017" rx="1" fill="none" stroke="#1c1f33" stroke-width="1.5"/><path d="M479.2,455.9839999999999 L487.59999999999997,455.9839999999999 M479.2,458.47599999999994 L487.59999999999997,458.47599999999994" stroke="#1c1f33" stroke-width="1.35"/><polyline points="446.30,510.42 451.30,516.42 456.30,510.42" fill="none" stroke="#3a4056" stroke-width="1.3" stroke-linecap="round" stroke-linejoin="round" /><path d="M479.76,505.17799999999994 L477.4,505.17799999999994 Q476.4,505.17799999999994 476.4,506.17799999999994 L476.4,520.02 Q476.4,521.02 477.4,521.02 L489.4,521.02 Q490.4,521.02 490.4,520.02 L490.4,506.17799999999994 Q490.4,505.17799999999994 489.4,505.17799999999994 L487.03999999999996,505.17799999999994" fill="none" stroke="#1c1f33" stroke-width="1.5" stroke-linejoin="round"/><rect x="479.76" y="503.9699999999999" width="7.28" height="2.67000000000001" rx="1" fill="none" stroke="#1c1f33" stroke-width="1.5"/><path d="M479.2,511.76399999999995 L487.59999999999997,511.76399999999995 M479.2,514.256 L487.59999999999997,514.256" stroke="#1c1f33" stroke-width="1.35"/><path d="M524.6,572.518 L524.6,563.6 Q524.6,562.6 523.6,562.6 L510.2,562.6 Q509.2,562.6 509.2,563.6 L509.2,576.6 Q509.2,577.6 510.2,577.6 L519.518,577.6 Z M519.518,577.6 L519.518,572.518 L524.6,572.518" fill="none" stroke="#1c1f33" stroke-width="1.35" stroke-linejoin="round"/><path d="M524.6,628.298 L524.6,619.38 Q524.6,618.38 523.6,618.38 L510.2,618.38 Q509.2,618.38 509.2,619.38 L509.2,632.38 Q509.2,633.38 510.2,633.38 L519.518,633.38 Z M519.518,633.38 L519.518,628.298 L524.6,628.298" fill="none" stroke="#1c1f33" stroke-width="1.35" stroke-linejoin="round"/><path d="M524.6,684.078 L524.6,675.16 Q524.6,674.16 523.6,674.16 L510.2,674.16 Q509.2,674.16 509.2,675.16 L509.2,688.16 Q509.2,689.16 510.2,689.16 L519.518,689.16 Z M519.518,689.16 L519.518,684.078 L524.6,684.078" fill="none" stroke="#1c1f33" stroke-width="1.35" stroke-linejoin="round"/><path d="M524.6,739.858 L524.6,730.9399999999999 Q524.6,729.9399999999999 523.6,729.9399999999999 L510.2,729.9399999999999 Q509.2,729.9399999999999 509.2,730.9399999999999 L509.2,743.9399999999999 Q509.2,744.9399999999999 510.2,744.9399999999999 L519.518,744.9399999999999 Z M519.518,744.9399999999999 L519.518,739.858 L524.6,739.858" fill="none" stroke="#1c1f33" stroke-width="1.35" stroke-linejoin="round"/><path d="M524.6,795.6379999999999 L524.6,786.7199999999999 Q524.6,785.7199999999999 523.6,785.7199999999999 L510.2,785.7199999999999 Q509.2,785.7199999999999 509.2,786.7199999999999 L509.2,799.7199999999999 Q509.2,800.7199999999999 510.2,800.7199999999999 L519.518,800.7199999999999 Z M519.518,800.7199999999999 L519.518,795.6379999999999 L524.6,795.6379999999999" fill="none" stroke="#1c1f33" stroke-width="1.35" stroke-linejoin="round"/><path d="M524.6,851.418 L524.6,842.5 Q524.6,841.5 523.6,841.5 L510.2,841.5 Q509.2,841.5 509.2,842.5 L509.2,855.5 Q509.2,856.5 510.2,856.5 L519.518,856.5 Z M519.518,856.5 L519.518,851.418 L524.6,851.418" fill="none" stroke="#1c1f33" stroke-width="1.35" stroke-linejoin="round"/><polyline points="449.40,899.48 455.00,904.28 449.40,909.08" fill="none" stroke="#3a4056" stroke-width="1.3" stroke-linecap="round" stroke-linejoin="round" /><path d="M479.76,895.6379999999999 L477.4,895.6379999999999 Q476.4,895.6379999999999 476.4,896.6379999999999 L476.4,910.48 Q476.4,911.48 477.4,911.48 L489.4,911.48 Q490.4,911.48 490.4,910.48 L490.4,896.6379999999999 Q490.4,895.6379999999999 489.4,895.6379999999999 L487.03999999999996,895.6379999999999" fill="none" stroke="#1c1f33" stroke-width="1.5" stroke-linejoin="round"/><rect x="479.76" y="894.43" width="7.28" height="2.67000000000001" rx="1" fill="none" stroke="#1c1f33" stroke-width="1.5"/><path d="M479.2,902.2239999999999 L487.59999999999997,902.2239999999999 M479.2,904.716 L487.59999999999997,904.716" stroke="#1c1f33" stroke-width="1.35"/><polyline points="449.40,955.26 455.00,960.06 449.40,964.86" fill="none" stroke="#3a4056" stroke-width="1.3" stroke-linecap="round" stroke-linejoin="round" /><path d="M479.76,951.4179999999999 L477.4,951.4179999999999 Q476.4,951.4179999999999 476.4,952.4179999999999 L476.4,966.26 Q476.4,967.26 477.4,967.26 L489.4,967.26 Q490.4,967.26 490.4,966.26 L490.4,952.4179999999999 Q490.4,951.4179999999999 489.4,951.4179999999999 L487.03999999999996,951.4179999999999" fill="none" stroke="#1c1f33" stroke-width="1.5" stroke-linejoin="round"/><rect x="479.76" y="950.2099999999999" width="7.28" height="2.67000000000001" rx="1" fill="none" stroke="#1c1f33" stroke-width="1.5"/><path d="M479.2,958.0039999999999 L487.59999999999997,958.0039999999999 M479.2,960.496 L487.59999999999997,960.496" stroke="#1c1f33" stroke-width="1.35"/><polyline points="449.40,1011.04 455.00,1015.84 449.40,1020.64" fill="none" stroke="#3a4056" stroke-width="1.3" stroke-linecap="round" stroke-linejoin="round" /><path d="M475,1022.34 L475,1009.34 Q475,1008.34 476,1008.34 L481.84,1008.34 L484.64,1011.14 L492,1011.14 Q493,1011.14 493,1012.14 L493,1022.34 Z M475,1012.82 L493,1012.82" fill="none" stroke="#1c1f33" stroke-width="1.5" stroke-linejoin="round"/><path d="M817.3,354 L817.8,349.3 L829.4,337.7 Q831.2,336 833,337.7 Q834.7,339.5 833,341.3 L821.4,352.9 Z M827.2,340 L830.7,343.5" fill="none" stroke="#1c1f33" stroke-width="1.5" stroke-linejoin="round"/><circle cx="855.0" cy="346" r="2.1" fill="#1c1f33"/><circle cx="861.8" cy="346" r="2.1" fill="#1c1f33"/><circle cx="868.5999999999999" cy="346" r="2.1" fill="#1c1f33"/></svg>
<div class="a" style="left:349px;top:1044.3px;width:1452px;height:52px;background:linear-gradient(#fff 0px,#fff 8px,#ebebeb 52px);"></div>
<div class="a" style="left:349px;top:1043px;width:1452px;height:1.8px;background:#dde2ea;"></div>
<div class="t" style="left:472.00px;top:1058.00px;font-size:19.5px;color:#1c1f33;letter-spacing:0.717px;">Item</div>
<div class="t" style="left:557.10px;top:1058.00px;font-size:19.5px;color:#8e9ab2;">N</div>
<svg style="left:0;top:0" width="1802" height="1096" viewBox="0 0 1802 1096"><path d="M443.20000000000005,1072.5 L458.0,1072.5 M450.6,1065.1 L450.6,1079.9" stroke="#1c1f33" stroke-width="1.6" stroke-linecap="round"/><polyline points="524.80,1072.60 530.80,1066.40 536.80,1072.60" fill="none" stroke="#8e9ab2" stroke-width="1.5" stroke-linecap="round" stroke-linejoin="round" /><path d="M548,1066.2 L555.6,1073.4 L551.6,1073.4 L551.6,1078.8 L544.4,1078.8 L544.4,1073.4 L540.4,1073.4 Z" fill="none" stroke="#8e9ab2" stroke-width="1.4" stroke-linejoin="round"/></svg>
<div class="a" style="left:349px;top:0px;width:1452px;height:231px;background:#fff;"></div>
<div class="t" style="left:411.00px;top:24.70px;font-size:19.5px;color:#4f5d7b;letter-spacing:0.008px;">Knowledge Base</div>
<div class="t" style="left:590.00px;top:24.70px;font-size:19.5px;color:#4f5d7b;letter-spacing:0.059px;">Sample Blueprints</div>
<div class="t" style="left:411.00px;top:68.70px;font-size:26px;color:#11142d;letter-spacing:0.093px;font-weight:bold;">1. Creative Deliverables (Marketing)</div>
<div class="a" style="left:865.6px;top:66.3px;width:78px;height:32.3px;background:#edf0f7;border-radius:7px;"></div>
<div class="t" style="left:902.90px;top:67.50px;font-size:16.5px;color:#1c1f33;letter-spacing:0.650px;">Info</div>
<div class="a" style="left:955px;top:66.3px;width:31.7px;height:32.3px;background:#edf0f7;border-radius:7px;"></div>
<div class="a" style="left:1397px;top:22.8px;width:170.6px;height:32.2px;background:#edf0f7;border-radius:7px;"></div>
<div class="a" style="left:1533.6px;top:22.8px;width:1.6px;height:32.2px;background:#fff;"></div>
<div class="t" style="left:1435.95px;top:24.10px;font-size:16.5px;color:#1c1f33;letter-spacing:0.339px;">Automation</div>
<div class="a" style="left:1578.7px;top:22.8px;width:93.2px;height:32.2px;background:#edf0f7;border-radius:7px;"></div>
<div class="t" style="left:1616.15px;top:24.10px;font-size:16.5px;color:#1c1f33;letter-spacing:0.062px;">Share</div>
<div class="a" style="left:1693.7px;top:22.8px;width:31.9px;height:32.2px;background:#edf0f7;border-radius:7px;"></div>
<div class="a" style="left:1737.4px;top:22.8px;width:32.2px;height:32.2px;background:#ff8595;border-radius:7px;"></div>
<div class="a" style="left:383px;top:120.8px;width:510.4px;height:42.8px;background:#e9ecf4;border-radius:10px;"></div>
<div class="a" style="left:386.6px;top:124.6px;width:112.4px;height:36.2px;background:#fff;border-radius:7px;"></div>
<div class="t" style="left:434.05px;top:128.00px;font-size:19.5px;color:#1c1f33;">Table</div>
<div class="t" style="left:550.60px;top:128.00px;font-size:19.5px;color:#4f5d7b;letter-spacing:0.325px;">Board</div>
<div class="t" style="left:673.95px;top:128.00px;font-size:19.5px;color:#4f5d7b;letter-spacing:0.105px;">Gantt Chart</div>
<div class="t" style="left:821.05px;top:128.00px;font-size:19.5px;color:#1c1f33;letter-spacing:-0.175px;">All</div>
<div class="t" style="left:954.45px;top:127.50px;font-size:19.5px;color:#2a7dd8;letter-spacing:0.067px;">All active tasks</div>
<div class="t" style="left:1133.20px;top:127.50px;font-size:19.5px;color:#1c1f33;letter-spacing:-0.117px;">Name</div>
<div class="t" style="left:1233.65px;top:127.50px;font-size:19.5px;color:#1c1f33;letter-spacing:0.113px;">Group</div>
<div class="t" style="left:1336.20px;top:127.50px;font-size:19.5px;color:#1c1f33;letter-spacing:0.120px;">Fields</div>
<div class="t" style="left:1437.80px;top:127.50px;font-size:19.5px;color:#1c1f33;letter-spacing:0.100px;">Subitems</div>
<div class="t" style="left:1568.40px;top:127.50px;font-size:19.5px;color:#1c1f33;letter-spacing:0.090px;">Public link</div>
<div class="a" style="left:349px;top:174.6px;width:1452px;height:1.3px;background:#edf0f5;"></div>
<div class="t" style="left:434.50px;top:189.00px;font-size:19.5px;color:#56647f;letter-spacing:-0.083px;">Name</div>
<div class="t" style="left:902.85px;top:189.00px;font-size:19.5px;color:#56647f;letter-spacing:-0.471px;">Assignee</div>
<div class="t" style="left:1087.40px;top:189.00px;font-size:19.5px;color:#56647f;letter-spacing:0.036px;">Progress</div>
<div class="t" style="left:1224.10px;top:189.00px;font-size:19.5px;color:#56647f;letter-spacing:0.160px;">Status</div>
<div class="t" style="left:1371.10px;top:189.00px;font-size:19.5px;color:#56647f;letter-spacing:0.278px;">Start date</div>
<div class="t" style="left:1514.10px;top:189.00px;font-size:19.5px;color:#56647f;letter-spacing:0.257px;">Due date</div>
<div class="t" style="left:1752.40px;top:189.00px;font-size:19.5px;color:#56647f;">Duration</div>
<div class="a" style="left:349px;top:231px;width:1452px;height:1.3px;background:#dee3ec;"></div>
<svg style="left:0;top:0" width="1802" height="1096" viewBox="0 0 1802 1096"><path d="M384.4,36.44 L392.7,32.3 L401,36.44 L392.7,40.166 Z" fill="#5aad5e" stroke="#5aad5e" stroke-width="0.6" stroke-linejoin="round"/><path d="M387.222,40.028 L392.7,41.96 L398.178,40.028 L398.178,43.754 Q392.7,47.204 387.222,43.754 Z" fill="#5aad5e"/><path d="M400.419,38.647999999999996 L400.419,42.236000000000004" stroke="#5aad5e" stroke-width="1.4" stroke-linecap="round"/><polyline points="572.00,34.70 577.80,39.50 572.00,44.30" fill="none" stroke="#4f5d7b" stroke-width="1.4" stroke-linecap="round" stroke-linejoin="round" /><path d="M388.35200000000003,75.60199999999999 L385.8,75.60199999999999 Q384.8,75.60199999999999 384.8,76.60199999999999 L384.8,90.8 Q384.8,91.8 385.8,91.8 L398.6,91.8 Q399.6,91.8 399.6,90.8 L399.6,76.60199999999999 Q399.6,75.60199999999999 398.6,75.60199999999999 L396.048,75.60199999999999" fill="none" stroke="#1c1f33" stroke-width="1.6" stroke-linejoin="round"/><rect x="388.35200000000003" y="74.39999999999999" width="7.696000000000006" height="2.7300000000000004" rx="1" fill="none" stroke="#1c1f33" stroke-width="1.6"/><path d="M387.76,82.336 L396.64000000000004,82.336 M387.76,84.884 L396.64000000000004,84.884" stroke="#1c1f33" stroke-width="1.4400000000000002"/><circle cx="887.8" cy="82.5" r="8.8" fill="none" stroke="#1c1f33" stroke-width="1.4"/><path d="M887.8,80.3 L887.8,87.2" stroke="#1c1f33" stroke-width="1.6"/><circle cx="887.8" cy="77.3" r="1.1" fill="#1c1f33" stroke="none" stroke-width="1.5"/><path d="M972.4,73.3 L979.7,81 Q974.35,81.9 972.4,89.2 L964,81.3 Q971.2,80.3 972.4,73.3 Z M967.9,85.5 L963.4,90.2" fill="none" stroke="#1c1f33" stroke-width="1.5" stroke-linejoin="round" stroke-linecap="round"/><path d="M1420.5,28.6 L1412,40.2 L1418.3,40.2 L1416.6,47.6 L1425.1,36 L1418.8,36 Z" fill="none" stroke="#1c1f33" stroke-width="1.4" stroke-linejoin="round"/><polyline points="1545.30,36.20 1550.50,42.40 1555.70,36.20" fill="none" stroke="#1c1f33" stroke-width="1.4" stroke-linecap="round" stroke-linejoin="round" /><circle cx="1598" cy="35" r="3.75" fill="none" stroke="#1c1f33" stroke-width="1.4"/><path d="M1602.8,31.3 A3.7,3.7 0 0 1 1602.8,38.5" fill="none" stroke="#1c1f33" stroke-width="1.4" stroke-linecap="round"/><path d="M1590.7,46.1 Q1591.6,41.3 1598,41.3 Q1604.4,41.3 1605.4,46.1 Z" fill="none" stroke="#1c1f33" stroke-width="1.4" stroke-linejoin="round"/><path d="M1606.3,41.6 Q1609.5,43 1609.6,45.3 Q1609.6,46.1 1608.3,46.1" fill="none" stroke="#1c1f33" stroke-width="1.4" stroke-linecap="round"/><circle cx="1709.6" cy="38.8" r="10.3" fill="none" stroke="#1c1f33" stroke-width="1.4"/><path d="M1707.1,35 Q1707.6,33.8 1709.8,33.8 Q1712.7,33.9 1712.7,36.4 Q1712.7,37.7 1711.1,39.1 Q1709.9,40.1 1709.4,41" fill="none" stroke="#1c1f33" stroke-width="1.45" stroke-linecap="round" stroke-linejoin="round"/><circle cx="1709.6" cy="43.4" r="1" fill="#1c1f33" stroke="none" stroke-width="1.5"/><path d="M1745.2,38.9 L1761.8,38.9 M1753.5,30.6 L1753.5,47.2" stroke="#fff" stroke-width="3"/><rect x="408.5" y="136.8" width="17.6" height="11.4" rx="0.6" fill="none" stroke="#1c1f33" stroke-width="1.3"/><path d="M408.5,140.6 L426.1,140.6 M408.5,144.4 L426.1,144.4 M412.8,136.8 L412.8,148.2" stroke="#1c1f33" stroke-width="1.1"/><path d="M528,134.8 L535,134.8 M537.5,134.8 L543.4,134.8" stroke="#4f5d7b" stroke-width="1.5"/><rect x="528.1" y="138.4" width="5.6" height="11.2" rx="1" fill="none" stroke="#4f5d7b" stroke-width="1.5"/><rect x="537.7" y="138.4" width="5.6" height="5.4" rx="1" fill="none" stroke="#4f5d7b" stroke-width="1.5"/><rect x="650.6" y="135.2" width="8.6" height="4.6" rx="1" fill="none" stroke="#4f5d7b" stroke-width="1.5"/><rect x="655" y="142" width="10.6" height="4.6" rx="1" fill="none" stroke="#4f5d7b" stroke-width="1.5"/><path d="M650,150.1 L666.1,150.1" stroke="#4f5d7b" stroke-width="1.5"/><polyline points="853.30,139.50 858.10,145.30 862.90,139.50" fill="none" stroke="#1c1f33" stroke-width="2" stroke-linecap="round" stroke-linejoin="round" /><path d="M928.8,134.6 L943.9,134.6 L937.9,142.8 L937.9,151.5 L934.6,148.6 L934.6,142.8 Z" fill="#1d7fe0" stroke="#1d7fe0" stroke-width="1" stroke-linejoin="round"/><path d="M1113.2,151 L1113.2,134.8 M1109,139 L1113.2,134.8 L1117.4,139 M1122.6,134.8 L1122.6,151 M1118.4,146.8 L1122.6,151 L1126.8,146.8" fill="none" stroke="#1c1f33" stroke-width="1.5" stroke-linecap="round" stroke-linejoin="round"/><rect x="1209.8" y="135" width="14.8" height="6.3" rx="1" fill="none" stroke="#1c1f33" stroke-width="1.4"/><rect x="1209.8" y="143.2" width="14.8" height="6.3" rx="1" fill="none" stroke="#1c1f33" stroke-width="1.4"/><path d="M1315,137 L1312,137 L1312,148 L1315,148 M1322,137 L1329,137 L1329,148 L1322,148 M1318.6,134 L1318.6,151 M1316.4,134 L1320.8,134 M1316.4,151 L1320.8,151" fill="none" stroke="#1c1f33" stroke-width="1.4"/><path d="M1412.6,135 L1412.6,146.4 L1415.8,146.4 M1412.6,139.7 L1415.8,139.7" fill="none" stroke="#1c1f33" stroke-width="1.4"/><rect x="1416.6" y="135.6" width="13.8" height="6.6" rx="1" fill="none" stroke="#1c1f33" stroke-width="1.4"/><rect x="1416.6" y="143.2" width="13.8" height="6.6" rx="1" fill="none" stroke="#1c1f33" stroke-width="1.4"/><circle cx="1553.3" cy="142.4" r="8.6" fill="none" stroke="#1c1f33" stroke-width="1.4"/><ellipse cx="1553.3" cy="142.4" rx="3.8" ry="8.6" fill="none" stroke="#1c1f33" stroke-width="1.3"/><path d="M1545,139.5 L1561.6,139.5 M1545,145.3 L1561.6,145.3" stroke="#1c1f33" stroke-width="1.3"/><circle cx="1682.8" cy="142.1" r="2.2" fill="#1c1f33"/><circle cx="1690.0" cy="142.1" r="2.2" fill="#1c1f33"/><circle cx="1697.2" cy="142.1" r="2.2" fill="#1c1f33"/><path d="M871,211.5 L871,194.6 M866.2,199.4 L871,194.6 L875.8,199.4" fill="none" stroke="#1c1f33" stroke-width="1.5" stroke-linecap="round" stroke-linejoin="round"/></svg>
<div class="a" style="left:878.5px;top:205px;width:348.4px;height:617.9px;background:#fff;border-radius:16px;box-shadow:0 6px 22px rgba(50,60,130,0.17),0 0 2px rgba(50,60,130,0.08);"></div>
<div class="t" style="left:945.80px;top:224.90px;font-size:19.5px;color:#1c1f33;letter-spacing:0.073px;">View details</div>
<div class="t" style="left:945.00px;top:271.30px;font-size:19.5px;color:#1c1f33;letter-spacing:0.217px;">Open</div>
<div class="t" style="left:945.00px;top:317.50px;font-size:19.5px;color:#1c1f33;letter-spacing:0.100px;">Open in new tab</div>
<div class="t" style="left:944.90px;top:364.00px;font-size:19.5px;color:#1c1f33;letter-spacing:0.037px;">Copy link</div>
<div class="t" style="left:945.85px;top:432.10px;font-size:19.5px;color:#1c1f33;letter-spacing:0.255px;">Add subitem</div>
<div class="t" style="left:944.90px;top:478.10px;font-size:19.5px;color:#1c1f33;letter-spacing:0.064px;">Collapse</div>
<div class="t" style="left:944.30px;top:545.80px;font-size:19.5px;color:#1c1f33;letter-spacing:0.320px;">Delete</div>
<div class="t" style="left:944.30px;top:614.10px;font-size:19.5px;color:#1c1f33;letter-spacing:0.356px;">Duplicate</div>
<div class="t" style="left:945.00px;top:660.20px;font-size:19.5px;color:#1c1f33;letter-spacing:0.009px;">Save as blueprint</div>
<div class="t" style="left:944.30px;top:728.30px;font-size:19.5px;color:#1c1f33;letter-spacing:-0.350px;">Rename</div>
<div class="t" style="left:944.90px;top:774.10px;font-size:19.5px;color:#1c1f33;letter-spacing:0.121px;">Change status</div>
<div class="a" style="left:910.9px;top:411.0px;width:283.3px;height:1.4px;background:#e3e7ef;"></div>
<div class="a" style="left:910.9px;top:525.0999999999999px;width:283.3px;height:1.4px;background:#e3e7ef;"></div>
<div class="a" style="left:910.9px;top:593.8px;width:283.3px;height:1.4px;background:#e3e7ef;"></div>
<div class="a" style="left:910.9px;top:707.5999999999999px;width:283.3px;height:1.4px;background:#e3e7ef;"></div>
<svg style="left:0;top:0" width="1802" height="1096" viewBox="0 0 1802 1096"><g transform="translate(923.3,378.5) rotate(-45)"><rect x="-10.2" y="-4" width="11.4" height="8" rx="4" fill="none" stroke="#1c1f33" stroke-width="1.4"/><rect x="-1.2" y="-4" width="11.4" height="8" rx="4" fill="none" stroke="#1c1f33" stroke-width="1.4"/></g><circle cx="922.6" cy="446.6" r="9.4" fill="none" stroke="#1c1f33" stroke-width="1.4"/><path d="M918.0,446.6 L927.2,446.6 M922.6,442.0 L922.6,451.20000000000005" stroke="#1c1f33" stroke-width="1.4" stroke-linecap="round"/><path d="M915.3,552.6 L931.1,552.6 M919.6,552.6 L919.6,549.6 L926.8,549.6 L926.8,552.6 M917.4,552.6 L917.4,568 L929,568 L929,552.6 M921.2,556 L921.2,564.6 M925.2,556 L925.2,564.6" fill="none" stroke="#1c1f33" stroke-width="1.4" stroke-linejoin="round"/><path d="M916.3,624.4 L915.6,624.4 L915.6,635.6 L926.8,635.6 L926.8,634.9" fill="none" stroke="#1c1f33" stroke-width="1.4"/><rect x="919.9" y="620.3" width="11.2" height="11.3" rx="1" fill="none" stroke="#1c1f33" stroke-width="1.4"/><path d="M922.2,626 L928.8,626 M925.5,622.7 L925.5,629.3" stroke="#1c1f33" stroke-width="1.3" stroke-linecap="round"/><circle cx="923.2" cy="788.6" r="9.4" fill="none" stroke="#1c1f33" stroke-width="1.4"/><polyline points="918.80,789.00 922.00,792.20 927.80,785.60" fill="none" stroke="#1c1f33" stroke-width="1.4" stroke-linecap="round" stroke-linejoin="round" /><polyline points="1179.80,783.00 1185.80,788.70 1179.80,794.40" fill="none" stroke="#4a4f63" stroke-width="1.25" stroke-linecap="round" stroke-linejoin="round" /></svg>
<div class="a" style="left:380.8px;top:119.2px;width:124px;height:47.4px;border:5.6px solid #0ace62;border-radius:12px;"></div>
<div class="a" style="left:386.4px;top:124.8px;width:112.8px;height:36.2px;border:1px solid #fff;border-radius:7px;"></div>
<div class="a" style="left:330.2px;top:117.00000000000001px;width:52.6px;height:52.6px;background:rgba(10,206,98,0.20);border-radius:50%;"></div>
<div class="a" style="left:338.2px;top:125.00000000000001px;width:36.6px;height:36.6px;background:#0ace62;border-radius:50%;"></div>
<div class="t" style="left:350.32px;top:127.80px;font-size:22px;color:#fff;font-weight:bold;">3</div>
<div class="a" style="left:839.1px;top:492px;width:46.8px;height:43.9px;border:5.8px solid #0ace62;border-radius:11px;background:#fff;"></div>
<div class="a" style="left:845.2px;top:498px;width:34.7px;height:31.8px;background:#c9d3de;border-radius:6px;"></div>
<svg style="left:0;top:0" width="1802" height="1096" viewBox="0 0 1802 1096"><circle cx="854.7" cy="513.1" r="2.2" fill="#0d0f1c"/><circle cx="861.5" cy="513.1" r="2.2" fill="#0d0f1c"/><circle cx="868.3" cy="513.1" r="2.2" fill="#0d0f1c"/></svg>
<div class="a" style="left:789.3px;top:488.29999999999995px;width:54px;height:54px;background:rgba(10,206,98,0.20);border-radius:50%;"></div>
<div class="a" style="left:796.5999999999999px;top:495.59999999999997px;width:39.4px;height:39.4px;background:#0ace62;border-radius:50%;"></div>
<div class="t" style="left:809.72px;top:499.80px;font-size:22.5px;color:#fff;font-weight:bold;">4</div>
<div class="a" style="left:896.9px;top:597px;width:175.8px;height:58.4px;border:5.8px solid #0ace62;border-radius:11px;"></div>
<div class="a" style="left:844.8000000000001px;top:599.1px;width:54.6px;height:54.6px;background:rgba(10,206,98,0.20);border-radius:50%;"></div>
<div class="a" style="left:852.1px;top:606.4px;width:40px;height:40px;background:#0ace62;border-radius:50%;"></div>
<div class="t" style="left:865.47px;top:610.90px;font-size:23px;color:#fff;font-weight:bold;">5</div>
<div class="a" style="left:0px;top:0px;width:1802px;height:1px;background:#161616;"></div>
<div class="a" style="left:0px;top:1px;width:1802px;height:1px;background:rgba(22,22,22,0.55);"></div>
<div class="a" style="left:0px;top:0px;width:1px;height:1096px;background:#050505;"></div>
<div class="a" style="left:1px;top:2px;width:1px;height:1093px;background:#4b7f88;"></div>
<div class="a" style="left:1801px;top:0px;width:1px;height:1096px;background:#050505;"></div>
<div class="a" style="left:0px;top:1095px;width:1802px;height:1px;background:#0a0a0a;"></div>
<div class="a" style="left:1px;top:1090px;width:6px;height:6px;background:radial-gradient(circle at 100% 0%, transparent 4.5px, #0a0a0a 5.5px);"></div>
</body></html>
